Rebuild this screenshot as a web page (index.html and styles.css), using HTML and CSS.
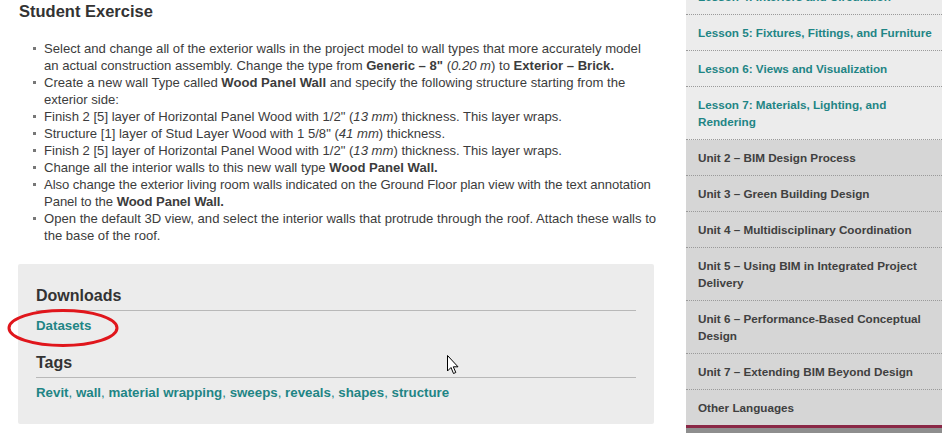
FILE: index.html
```html
<!DOCTYPE html>
<html lang="en">
<head>
    <meta charset="UTF-8">
    <meta name="viewport" content="width=device-width, initial-scale=1.0">
    <title>Student Exercise</title>
    <link rel="stylesheet" href="styles.css">
</head>
<body>
    <div class="page">
        <div class="main">
            <h2 class="title">Student Exercise</h2>
            <ul class="steps">
                <li>Select and change all of the exterior walls in the project model to wall types that more accurately model an actual construction assembly. Change the type from <b>Generic &ndash; 8"</b> (<i>0.20 m</i>) to <b>Exterior &ndash; Brick.</b></li>
                <li>Create a new wall Type called <b>Wood Panel Wall</b> and specify the following structure starting from the exterior side:</li>
                <li>Finish 2 [5] layer of Horizontal Panel Wood with 1/2" (<i>13 mm</i>) thickness. This layer wraps.</li>
                <li>Structure [1] layer of Stud Layer Wood with 1 5/8" (<i>41 mm</i>) thickness.</li>
                <li>Finish 2 [5] layer of Horizontal Panel Wood with 1/2" (<i>13 mm</i>) thickness. This layer wraps.</li>
                <li>Change all the interior walls to this new wall type <b>Wood Panel Wall.</b></li>
                <li class="tight">Also change the exterior living room walls indicated on the Ground Floor plan view with the text annotation Panel to the <b>Wood Panel Wall.</b></li>
                <li>Open the default 3D view, and select the interior walls that protrude through the roof. Attach these walls to the base of the roof.</li>
            </ul>

            <div class="extras">
                <h3 class="extras-title">Downloads</h3>
                <p class="links"><a href="#">Datasets</a></p>
                <h3 class="extras-title">Tags</h3>
                <p class="links">
                    <a href="#">Revit</a>, <a href="#">wall</a>, <a href="#">material wrapping</a>, <a href="#">sweeps</a>, <a href="#">reveals</a>, <a href="#">shapes</a>, <a href="#">structure</a>
                </p>
            </div>
        </div>

        <div class="sidebar">
            <ul class="nav">
                <li class="lesson"><a href="#">Lesson 4: Interiors and Circulation</a></li>
                <li class="lesson"><a href="#">Lesson 5: Fixtures, Fittings, and Furniture</a></li>
                <li class="lesson"><a href="#">Lesson 6: Views and Visualization</a></li>
                <li class="lesson"><a href="#">Lesson 7: Materials, Lighting, and Rendering</a></li>
                <li class="unit"><a href="#">Unit 2 &ndash; BIM Design Process</a></li>
                <li class="unit"><a href="#">Unit 3 &ndash; Green Building Design</a></li>
                <li class="unit"><a href="#">Unit 4 &ndash; Multidisciplinary Coordination</a></li>
                <li class="unit"><a href="#">Unit 5 &ndash; Using BIM in Integrated Project Delivery</a></li>
                <li class="unit"><a href="#">Unit 6 &ndash; Performance-Based Conceptual Design</a></li>
                <li class="unit"><a href="#">Unit 7 &ndash; Extending BIM Beyond Design</a></li>
                <li class="unit"><a href="#">Other Languages</a></li>
            </ul>
            <div class="sidebar-foot"></div>
        </div>
    </div>

    <!-- red marker drawn over the Datasets link -->
    <svg class="circle-mark" width="116" height="42" viewBox="0 0 116 42">
        <ellipse cx="58" cy="21" rx="54" ry="17.5" fill="none" stroke="#e0161c" stroke-width="3"/>
    </svg>

    <!-- mouse pointer -->
    <svg class="pointer" width="13" height="20" viewBox="0 0 13 20">
        <path d="M0.5 0.5 L0.5 16 L4 12.5 L6.5 18.5 L8.8 17.5 L6.3 11.8 L11 11.8 Z" fill="#fff" stroke="#000" stroke-width="1" stroke-linejoin="miter"/>
    </svg>
</body>
</html>
```

FILE: styles.css
```css
body {
    margin: 0;
    font-family: "Liberation Sans", Arial, sans-serif;
    color: #333;
    background: #fff;
    overflow: hidden;
}

a {
    color: #1f8585;
    text-decoration: none;
    font-weight: bold;
}

.page {
    display: flex;
    align-items: flex-start;
}

.main {
    width: 636px;
    margin-left: 18px;
}

.title {
    font-size: 16.5px;
    line-height: 20px;
    margin: 1px 0 0 1px;
    color: #333;
}

.steps {
    list-style: none;
    margin: 19px -4px 0 0;
    padding-left: 26px;
    font-size: 13.1px;
    line-height: 17px;
    color: #3c3c3c;
}

.steps li {
    margin: 0;
}

.steps .tight {
    letter-spacing: -0.07px;
}

/* small grey bullet */
.steps li::before {
    content: "";
    display: inline-block;
    width: 3px;
    height: 3px;
    background: #777;
    margin-left: -11px;
    margin-right: 8px;
    vertical-align: 3px;
}

.extras {
    margin-top: 20px;
    background: #ececec;
    padding: 22px 18px 23px;
    border-radius: 2px;
}

.extras-title {
    font-size: 16px;
    line-height: 20px;
    margin: 0;
    padding-bottom: 4px;
    border-bottom: 1px solid #b8b8b8;
}

.links {
    margin: 6px 0 19px;
    font-size: 13.3px;
    line-height: 17px;
    color: #1f8585;
}

.links:last-child {
    margin-bottom: 0;
}

/* sidebar navigation */
.sidebar {
    width: 256px;
    margin-left: 32px;
    margin-top: -21px;
}

.nav {
    list-style: none;
    margin: 0;
    padding: 0;
}

.nav li {
    padding: 9px 0 9px 12px;
    font-size: 11.7px;
    line-height: 17px;
    border-bottom: 1px dotted #9a9a9a;
}

.lesson {
    background: #ececec;
}

.unit {
    background: #d6d6d6;
}

.unit a {
    color: #404040;
}

.nav li:last-child {
    border-bottom: 3px solid #8a2846;
}

.sidebar-foot {
    height: 40px;
    background: #8e8e8e;
}

.circle-mark {
    position: absolute;
    left: 5px;
    top: 307px;
}

.pointer {
    position: absolute;
    left: 447px;
    top: 355px;
}
```
